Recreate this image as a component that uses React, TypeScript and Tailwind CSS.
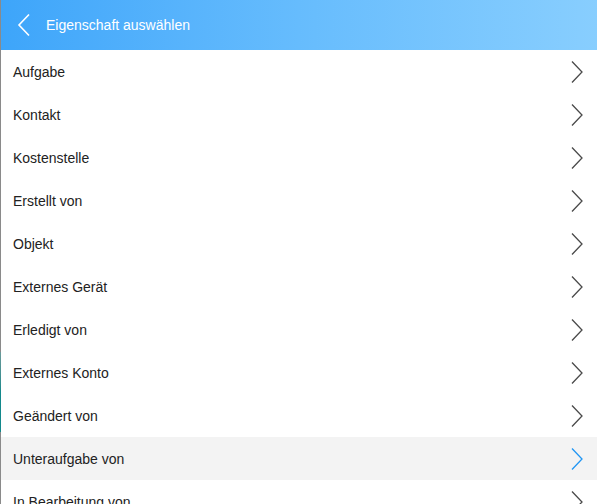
import React from "react";

const items = [
  "Aufgabe",
  "Kontakt",
  "Kostenstelle",
  "Erstellt von",
  "Objekt",
  "Externes Gerät",
  "Erledigt von",
  "Externes Konto",
  "Geändert von",
  "Unteraufgabe von",
  "In Bearbeitung von",
];

function Chevron({ active }: { active?: boolean }) {
  return (
    <svg width="14" height="24" viewBox="0 0 14 24" fill="none">
      <path
        d="M2 1.5 L12 12 L2 22.5"
        stroke={active ? "#2196f3" : "#4a4a4a"}
        strokeWidth="1.3"
      />
    </svg>
  );
}

export default function App() {
  return (
    <div
      className="relative w-[597px] h-[504px] overflow-hidden bg-white"
      style={{ fontFamily: '"Liberation Sans", Arial, sans-serif' }}
    >
      <div className="absolute left-0 top-0 w-px h-full bg-[#8a8a8a] z-10" />
      <div className="absolute left-0 top-[352px] w-px h-[80px] bg-gradient-to-b from-[#6a9a9a] via-[#13898c] to-[#13898c] z-10" />
      <div className="h-[50px] flex items-center bg-gradient-to-r from-[#3da5fa] via-[#66bcfd] to-[#88cefe]">
        <div className="w-[46px] flex items-center justify-center pl-[1px]">
          <svg width="14" height="24" viewBox="0 0 14 24" fill="none">
            <path d="M12 1.5 L2 12 L12 22.5" stroke="#ffffff" strokeWidth="1.6" />
          </svg>
        </div>
        <span className="text-white text-[14px] pt-[1px]">Eigenschaft auswählen</span>
      </div>
      <div className="flex flex-col">
        {items.map((t, i) => {
          const active = t === "Unteraufgabe von";
          return (
            <div
              key={i}
              className={`h-[43px] shrink-0 flex items-center justify-between pl-[13px] pr-[13px] ${
                active ? "bg-[#f3f3f3]" : "bg-white"
              }`}
            >
              <span className="text-[14px] text-[#222222] pt-[2px]">{t}</span>
              <Chevron active={active} />
            </div>
          );
        })}
      </div>
    </div>
  );
}
